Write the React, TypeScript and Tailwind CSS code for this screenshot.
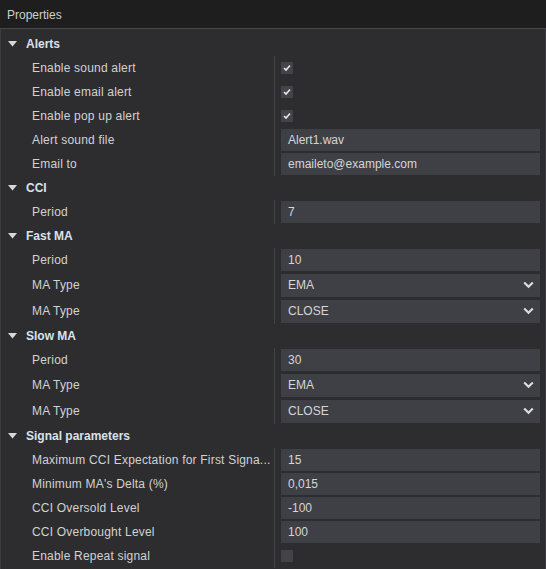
import React from 'react';

type Field =
  | { label: string; kind: 'check'; checked: boolean }
  | { label: string; kind: 'text'; value: string }
  | { label: string; kind: 'select'; value: string };

interface Group {
  title: string;
  fields: Field[];
}

const groups: Group[] = [
  {
    title: 'Alerts',
    fields: [
      { label: 'Enable sound alert', kind: 'check', checked: true },
      { label: 'Enable email alert', kind: 'check', checked: true },
      { label: 'Enable pop up alert', kind: 'check', checked: true },
      { label: 'Alert sound file', kind: 'text', value: 'Alert1.wav' },
      { label: 'Email to', kind: 'text', value: 'emaileto@example.com' },
    ],
  },
  {
    title: 'CCI',
    fields: [{ label: 'Period', kind: 'text', value: '7' }],
  },
  {
    title: 'Fast MA',
    fields: [
      { label: 'Period', kind: 'text', value: '10' },
      { label: 'MA Type', kind: 'select', value: 'EMA' },
      { label: 'MA Type', kind: 'select', value: 'CLOSE' },
    ],
  },
  {
    title: 'Slow MA',
    fields: [
      { label: 'Period', kind: 'text', value: '30' },
      { label: 'MA Type', kind: 'select', value: 'EMA' },
      { label: 'MA Type', kind: 'select', value: 'CLOSE' },
    ],
  },
  {
    title: 'Signal parameters',
    fields: [
      { label: 'Maximum CCI Expectation for First Signa...', kind: 'text', value: '15' },
      { label: "Minimum MA's Delta (%)", kind: 'text', value: '0,015' },
      { label: 'CCI Oversold Level', kind: 'text', value: '-100' },
      { label: 'CCI Overbought Level', kind: 'text', value: '100' },
      { label: 'Enable Repeat signal', kind: 'check', checked: false },
    ],
  },
];

function Check({ checked }: { checked: boolean }) {
  return (
    <div className="w-3 h-3 bg-[#434349] flex items-center justify-center">
      {checked && (
        <svg width="8" height="8" viewBox="0 0 8 8">
          <path d="M1 4 L3 6 L7 1.5" fill="none" stroke="#e8e8e8" strokeWidth="1.6" />
        </svg>
      )}
    </div>
  );
}

function Value({ field }: { field: Field }) {
  if (field.kind === 'check') return <Check checked={field.checked} />;
  if (field.kind === 'text') {
    return (
      <div className="h-[22px] w-full bg-[#3f3f46] pl-[7px] flex items-center text-[#d6d6d6]">
        {field.value}
      </div>
    );
  }
  return (
    <div className="h-[23px] w-full bg-[#3f3f46] pl-[7px] pr-[6px] flex items-center justify-between text-[#d6d6d6]">
      <span>{field.value}</span>
      <svg width="11" height="8" viewBox="0 0 11 8">
        <path d="M1.2 1.5 L5.5 5.8 L9.8 1.5" fill="none" stroke="#dcdcdc" strokeWidth="2.2" />
      </svg>
    </div>
  );
}

function GroupBlock({ group }: { group: Group }) {
  return (
    <div>
      <div className="h-6 flex items-center">
        <svg className="ml-[7px] mr-[9px]" width="9" height="6" viewBox="0 0 9 6">
          <path d="M0 0 H9 L4.5 5.5 Z" fill="#d8d8d8" />
        </svg>
        <span className="font-bold text-[#d9e1ec]">{group.title}</span>
      </div>
      <div className="flex flex-col">
        {group.fields.map((f, i) => (
          <div key={i} className={`flex items-stretch ${f.kind === 'select' ? 'h-[26px]' : 'h-6'}`}>
            <div className="w-[273px] pl-[31px] flex items-center text-[#d2d2d2] whitespace-nowrap overflow-hidden tracking-[0.2px]">
              {f.label}
            </div>
            <div className="w-px bg-[#424247]" />
            <div className="flex-1 pl-[6px] pr-[5px] flex items-center">
              <Value field={f} />
            </div>
          </div>
        ))}
      </div>
    </div>
  );
}

export default function App() {
  return (
    <div
      className="w-[546px] h-[569px] bg-[#2d2d30] text-[12px] overflow-hidden flex flex-col"
      style={{ fontFamily: '"Liberation Sans", Arial, sans-serif' }}
    >
      <div className="h-[29px] shrink-0 bg-[#1e1e1e] border-b border-[#47474c] flex items-center pl-[7px] pt-[2px] text-[#cfcfcf]">
        Properties
      </div>
      <div className="flex-1 border-l border-r border-[#3c3c41] pt-[3px]">
        {groups.map((g) => (
          <GroupBlock key={g.title} group={g} />
        ))}
      </div>
    </div>
  );
}
